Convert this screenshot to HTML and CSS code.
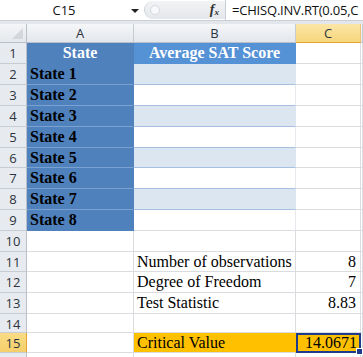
FILE: index.html
```html
<!DOCTYPE html>
<html lang="en">
<head>
  <meta charset="UTF-8">
  <title>CHISQ.INV.RT</title>
  <link rel="stylesheet" href="styles.css">
</head>
<body>
  <div class="formula-bar">
    <div class="name-box">C15</div>
    <div class="name-arrow"></div>
    <div class="fx-area">
      <span class="grip"></span>
      <span class="fx">f<sub>x</sub></span>
    </div>
    <div class="formula">=CHISQ.INV.RT(0.05,C</div>
  </div>
  <div class="strip"></div>

  <div class="sheet">
    <!-- column headers -->
    <div class="corner"><span class="tri"></span></div>
    <div class="col-head">A</div>
    <div class="col-head">B</div>
    <div class="col-head active">C</div>
    <div class="col-head"></div>

    <div class="row-head">1</div>
    <div class="cell title dark">State</div>
    <div class="cell title light">Average SAT Score</div>
    <div class="cell"></div><div class="cell"></div>

    <div class="row-head">2</div>
    <div class="cell state">State 1</div>
    <div class="cell band"></div>
    <div class="cell"></div><div class="cell"></div>

    <div class="row-head">3</div>
    <div class="cell state">State 2</div>
    <div class="cell plain"></div>
    <div class="cell"></div><div class="cell"></div>

    <div class="row-head">4</div>
    <div class="cell state">State 3</div>
    <div class="cell band"></div>
    <div class="cell"></div><div class="cell"></div>

    <div class="row-head">5</div>
    <div class="cell state">State 4</div>
    <div class="cell plain"></div>
    <div class="cell"></div><div class="cell"></div>

    <div class="row-head">6</div>
    <div class="cell state">State 5</div>
    <div class="cell band"></div>
    <div class="cell"></div><div class="cell"></div>

    <div class="row-head">7</div>
    <div class="cell state">State 6</div>
    <div class="cell plain"></div>
    <div class="cell"></div><div class="cell"></div>

    <div class="row-head">8</div>
    <div class="cell state">State 7</div>
    <div class="cell band"></div>
    <div class="cell"></div><div class="cell"></div>

    <div class="row-head">9</div>
    <div class="cell state last">State 8</div>
    <div class="cell plain last"></div>
    <div class="cell"></div><div class="cell"></div>

    <div class="row-head">10</div>
    <div class="cell"></div><div class="cell"></div><div class="cell"></div><div class="cell"></div>

    <div class="row-head">11</div>
    <div class="cell"></div>
    <div class="cell text">Number of observations</div>
    <div class="cell num">8</div>
    <div class="cell"></div>

    <div class="row-head">12</div>
    <div class="cell"></div>
    <div class="cell text">Degree of Freedom</div>
    <div class="cell num">7</div>
    <div class="cell"></div>

    <div class="row-head">13</div>
    <div class="cell"></div>
    <div class="cell text">Test Statistic</div>
    <div class="cell num">8.83</div>
    <div class="cell"></div>

    <div class="row-head">14</div>
    <div class="cell"></div><div class="cell"></div><div class="cell"></div><div class="cell"></div>

    <div class="row-head active">15</div>
    <div class="cell"></div>
    <div class="cell text orange">Critical Value</div>
    <div class="cell num orange selected">14.0671<span class="handle"></span></div>
    <div class="cell"></div>

    <div class="row-head"></div>
    <div class="cell"></div><div class="cell"></div><div class="cell"></div><div class="cell"></div>
  </div>
</body>
</html>
```

FILE: styles.css
```css
body {
  margin: 0;
  width: 363px;
  height: 357px;
  overflow: hidden;
  background: #fff;
  font-family: "Open Sans", "Liberation Sans", sans-serif;
}

/* formula bar */
.formula-bar {
  display: flex;
  height: 20px;
  border-bottom: 1px solid #c9cfd7;
  background: #fff;
  font-size: 13px;
  color: #111;
}
.name-box {
  width: 128px;
  text-align: center;
  line-height: 20px;
}
.name-arrow {
  width: 16px;
  position: relative;
}
.name-arrow:after {
  content: "";
  position: absolute;
  left: 3px;
  top: 9px;
  border-left: 4px solid transparent;
  border-right: 4px solid transparent;
  border-top: 4px solid #222;
}
.fx-area {
  width: 81px;
  display: flex;
  align-items: center;
  justify-content: space-between;
  background: linear-gradient(#f2f3f5, #e4e7eb);
  border-radius: 9px 0 0 9px;
  border-left: 1px solid #cfd4da;
  margin: 1px 0;
  padding: 0 6px 0 5px;
  box-sizing: border-box;
}
.grip {
  width: 8px;
  height: 8px;
  border-radius: 50%;
  border: 1px solid #d4d8dd;
  background: #f7f8f9;
}
.fx {
  font-family: "Liberation Serif", serif;
  font-style: italic;
  font-weight: bold;
  font-size: 14px;
  color: #333;
}
.fx sub {
  font-size: 9px;
  vertical-align: -1px;
}
.formula {
  flex: 1;
  border-left: 1px solid #c9cfd7;
  padding-left: 6px;
  line-height: 20px;
  letter-spacing: -0.2px;
  white-space: nowrap;
  overflow: hidden;
}
.strip {
  height: 3px;
  background: #e3e7ec;
}

/* sheet grid */
.sheet {
  display: grid;
  grid-template-columns: 27px 107px 162px 65px 2px;
  grid-template-rows: 19px 21px 21px 21px 21px 21px 20px 21px 21px 21px 21px 20px 21px 21px 19px 20px 20px;
}
.sheet > div {
  box-sizing: border-box;
  overflow: hidden;
  white-space: nowrap;
}
.corner {
  background: linear-gradient(#f4f5f7, #e5e8ec);
  border-right: 1px solid #b9c0c9;
  border-bottom: 1px solid #b9c0c9;
  position: relative;
}
.tri {
  position: absolute;
  right: 3px;
  bottom: 3px;
  border-left: 11px solid transparent;
  border-bottom: 11px solid #d3d7dc;
}
.col-head {
  background: linear-gradient(#f5f6f8, #e3e7ec);
  border-right: 1px solid #c6ccd4;
  border-bottom: 1px solid #b9c0c9;
  text-align: center;
  font-size: 13px;
  line-height: 18px;
  color: #2b3440;
}
.col-head.active {
  background: linear-gradient(#fbe6a8, #f7d67c);
  border-bottom: 1px solid #e2a535;
  border-right-color: #e9c37b;
}
.row-head {
  background: #e7eaee;
  border-right: 1px solid #b9c0c9;
  border-bottom: 1px solid #c6ccd4;
  text-align: center;
  font-size: 13px;
  line-height: 20px;
  color: #2b3440;
}
.row-head.active {
  background: linear-gradient(#f9dc86, #f5cf6a);
  border-right: 1px solid #e2a535;
}

.cell {
  border-right: 1px solid #dadcdf;
  border-bottom: 1px solid #dadcdf;
  font-family: "Liberation Serif", serif;
  font-size: 16px;
  line-height: 20px;
  color: #000;
}
.title {
  color: #fff;
  font-weight: bold;
  text-align: center;
}
.dark {
  background: #4f81bd;
  border-color: #4f81bd;
}
.light {
  background: #5591d5;
  border-color: #5591d5;
}
.state {
  background: #4f81bd;
  border-right-color: #4f81bd;
  border-bottom: 1px solid #7aa1d2;
  font-weight: bold;
  padding-left: 3px;
}
.band {
  background: #dce6f1;
  border-right-color: #dce6f1;
  border-bottom: 1px solid #a7c0df;
}
.plain {
  background: #fff;
  border-right-color: #e6e9ee;
  border-bottom: 1px solid #a7c0df;
}
.state.last {
  border-bottom-color: #4f81bd;
}
.plain.last {
  border-bottom-color: #dadcdf;
}
.text {
  padding-left: 3px;
}
.num {
  text-align: right;
  padding-right: 4px;
}
.orange {
  background: #ffc000;
  border-right-color: #ffc000;
}
.selected {
  border: 2px solid #1f3c8c;
  line-height: 16px;
  padding-right: 2px;
  overflow: visible !important;
  position: relative;
}
.handle {
  position: absolute;
  right: -4px;
  bottom: -4px;
  width: 5px;
  height: 5px;
  background: #1f3c8c;
  border: 1px solid #fff;
}
```
